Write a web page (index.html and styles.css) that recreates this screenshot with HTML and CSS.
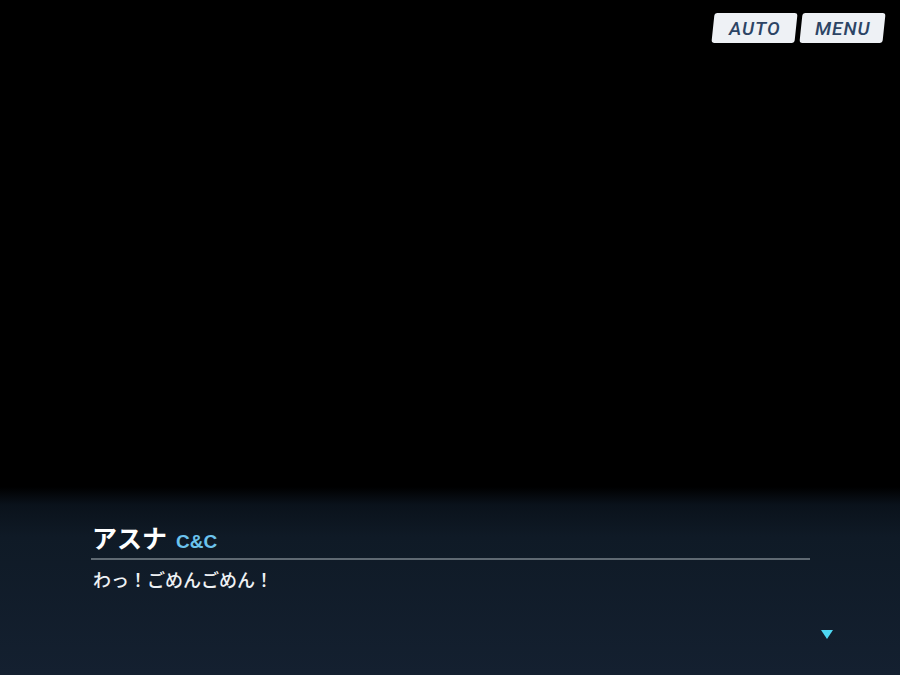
FILE: index.html
```html
<!DOCTYPE html>
<html lang="ja">
<head>
<meta charset="utf-8">
<link rel="stylesheet" href="styles.css">
</head>
<body>
<div class="screen">
  <div class="topbar">
    <div class="btn"><span>AUTO</span></div>
    <div class="btn"><span>MENU</span></div>
  </div>
  <div class="stage"></div>
  <div class="dialog">
    <div class="inner">
      <div class="namerow">
        <span class="name">アスナ</span>
        <span class="club">C&amp;C</span>
      </div>
      <div class="text">わっ！ごめんごめん！</div>
      <div class="next"></div>
    </div>
  </div>
</div>
</body>
</html>
```
FILE: styles.css
```css
html, body {
  margin: 0;
  padding: 0;
  background: #000;
}
.screen {
  width: 900px;
  height: 675px;
  display: flex;
  flex-direction: column;
  background: #000;
  overflow: hidden;
  font-family: "Noto Sans CJK JP", "Noto Sans", sans-serif;
}
.topbar {
  display: flex;
  justify-content: flex-end;
  gap: 5px;
  padding: 13px 16px 0 0;
}
.btn {
  width: 83px;
  height: 30px;
  background: #eef1f5;
  border-radius: 3px;
  transform: skewX(-6deg);
  display: flex;
  align-items: center;
  justify-content: center;
}
.btn span {
  transform: skewX(6deg);
  font-family: Roboto, "Liberation Sans", Arial, sans-serif;
  font-style: italic;
  font-weight: 500;
  font-size: 19px;
  letter-spacing: 1px;
  color: #2c4465;
}
.stage {
  flex: 1;
}
.dialog {
  height: 188px;
  background: linear-gradient(to bottom, #000 0px, #0a121b 18px, #0f1a26 50px, #142030 188px);
}
.inner {
  margin-left: 91px;
  width: 719px;
  padding-top: 34px;
  display: flex;
  flex-direction: column;
}
.namerow {
  display: flex;
  align-items: baseline;
  gap: 9px;
  padding-left: 1px;
  padding-bottom: 4px;
  border-bottom: 2px solid #5f6972;
  height: 33px;
  box-sizing: content-box;
}
.name {
  color: #fff;
  font-size: 25px;
  font-weight: 700;
  line-height: 33px;
}
.club {
  color: #6cc3ee;
  font-family: "Liberation Sans", Arial, sans-serif;
  font-size: 19px;
  font-weight: 700;
}
.text {
  margin-top: 6px;
  padding-left: 2px;
  color: #eef1f4;
  font-size: 18px;
  font-weight: 500;
  line-height: 26px;
}
.next {
  align-self: flex-end;
  margin-top: 38px;
  margin-right: -23px;
  width: 0;
  height: 0;
  border-left: 6px solid transparent;
  border-right: 6px solid transparent;
  border-top: 9px solid #4ed7f2;
}
```
